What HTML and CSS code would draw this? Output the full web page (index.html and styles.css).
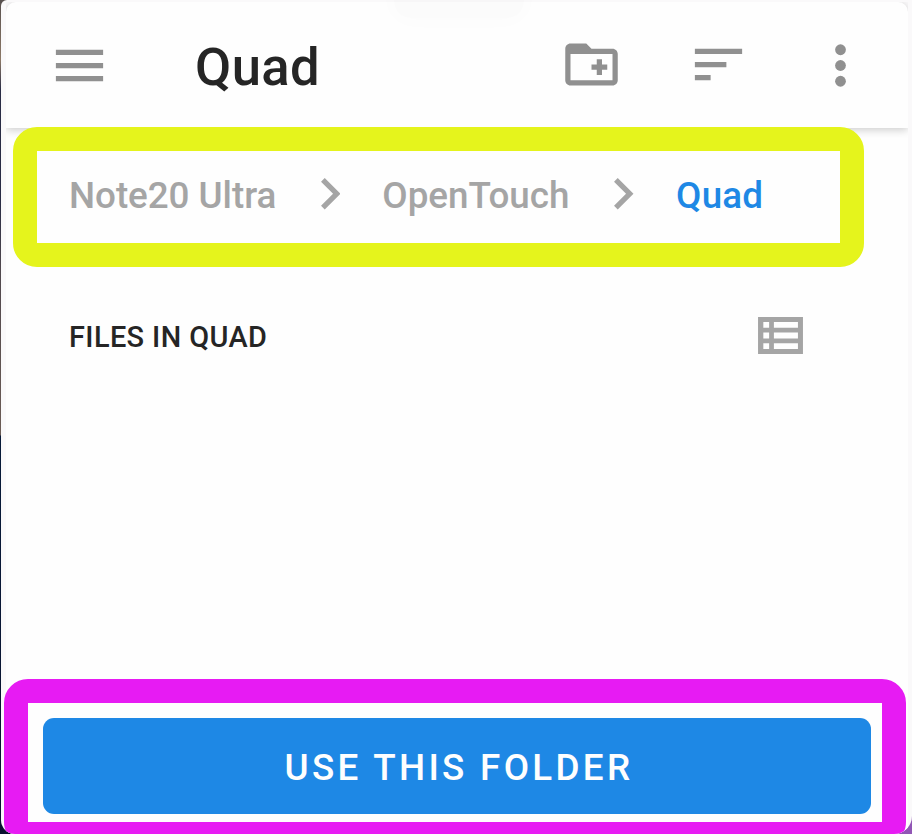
FILE: index.html
```html
<!DOCTYPE html>
<html lang="en">
<head>
<meta charset="utf-8">
<title>Quad</title>
<link rel="stylesheet" href="styles.css">
</head>
<body>
<div class="window">
  <main class="screen">
    <header class="app-bar">
      <svg class="icon menu" viewBox="0 0 24 24"><path d="M3 18h18v-2H3zM3 13h18v-2H3zM3 6v2h18V6z"/></svg>
      <h1 class="title">Quad</h1>
      <svg class="icon new-folder" viewBox="0 0 24 24"><path fill-rule="evenodd" d="M20 6h-8l-2-2H4c-1.11 0-1.99.89-1.99 2L2 18c0 1.11.89 2 2 2h16c1.11 0 2-.89 2-2V8c0-1.11-.89-2-2-2zm0 12H4V8h16z"/><path d="M12 14h2v2h2v-2h2v-2h-2v-2h-2v2h-2z"/></svg>
      <svg class="icon sort" viewBox="0 0 24 24"><path d="M3 18h6v-2H3zM3 6v2h18V6zM3 13h12v-2H3z"/></svg>
      <svg class="icon more" viewBox="0 0 24 24"><circle cx="12" cy="6" r="2.05"/><circle cx="12" cy="12" r="2.05"/><circle cx="12" cy="18" r="2.05"/></svg>
    </header>
    <nav class="breadcrumbs">
      <span class="crumb first">Note20 Ultra</span>
      <svg class="chevron" viewBox="8.59 6 7.41 12"><path d="M10 6 8.59 7.41 13.17 12l-4.58 4.59L10 18l6-6z"/></svg>
      <span class="crumb second">OpenTouch</span>
      <svg class="chevron" viewBox="8.59 6 7.41 12"><path d="M10 6 8.59 7.41 13.17 12l-4.58 4.59L10 18l6-6z"/></svg>
      <span class="crumb current">Quad</span>
    </nav>
    <section class="files">
      <h2 class="files-title">FILES IN QUAD</h2>
      <svg class="list-icon" viewBox="0 0 17 14"><path fill-rule="evenodd" d="M0 0h17v14H0zM2 1.9v2.2h2.2V1.9zm4 0v2.2h9.1V1.9zM2 5.9v2.2h2.2V5.9zm4 0v2.2h9.1V5.9zM2 9.9v2.2h2.2V9.9zm4 0v2.2h9.1V9.9z"/></svg>
    </section>
    <footer class="action">
      <button class="use-folder">USE THIS FOLDER</button>
    </footer>
  </main>
  <div class="camera-shade"></div>
</div>
</body>
</html>
```

FILE: styles.css
```css
* { box-sizing: border-box; }

body {
  margin: 0;
  height: 834px;
  overflow: hidden;
  padding-left: 1px;
  font-family: Roboto, "Liberation Sans", sans-serif;
  background: linear-gradient(90deg, transparent 50%, #9156b5 50%) 0 100% / 100% 20px no-repeat,
    linear-gradient(#57504e 0, #8c7967 60px, #292c45 90px, #292c45 200px, #50484d 270px, #6b5c55 435px, #071a38 436px, #0b1230 834px);
}

.window {
  position: relative;
  height: 834px;
  padding: 2px 4px 0 5px;
  border-radius: 6px 0 18px 14px;
  background: #faf9fa;
  overflow: hidden;
}

.screen {
  display: flex;
  flex-direction: column;
  height: 832px;
  border-radius: 10px 10px 0 0;
  background: #fefefe;
}

.app-bar {
  display: flex;
  align-items: center;
  flex: none;
  height: 126px;
  padding-left: 42px;
  border-radius: 10px 10px 0 0;
  background: #fefefe;
  box-shadow: 0 2px 9px rgba(0, 0, 0, 0.2);
  clip-path: inset(0 0 -16px 0);
}

.icon {
  flex: none;
  width: 63px;
  height: 63px;
  fill: #909090;
}

.title {
  width: 364px;
  margin: 3px 0 0 84px;
  font-size: 52.6px;
  font-weight: 500;
  line-height: 62px;
  letter-spacing: 0.4px;
  color: #252525;
}

.new-folder { margin: -2px 0 0 1px; }
.sort { margin: -1px 0 0 64px; }
.more { margin-left: 59px; }

.breadcrumbs {
  position: relative;
  display: flex;
  align-items: center;
  flex: none;
  width: 851px;
  height: 140px;
  margin: -1px 0 0 7px;
  padding: 0 0 6px 32px;
  border: 24px solid #e5f41c;
  border-radius: 24px;
  background: #fefefe;
}

.crumb {
  flex: none;
  padding-top: 4px;
  font-size: 36.8px;
  font-weight: 500;
  line-height: 44px;
  white-space: nowrap;
  color: #a5a5a5;
}

.first { width: 251.5px; letter-spacing: -0.05px; }
.second { width: 232px; }
.current { color: #1e88e5; letter-spacing: 0.2px; }

.chevron {
  flex: none;
  width: 19.5px;
  height: 31.5px;
  fill: #a5a5a5;
}

.chevron + .crumb { margin-left: 42.3px; }

.files {
  display: flex;
  align-items: center;
  justify-content: space-between;
  margin-top: 50px;
  padding: 0 105px 0 63px;
}

.files-title {
  margin: 3px 0 0;
  font-size: 28.9px;
  font-weight: 500;
  line-height: 34px;
  letter-spacing: 0.4px;
  color: #252525;
}

.list-icon {
  width: 45px;
  height: 37px;
  fill: #a5a5a5;
}

.action {
  flex: none;
  width: 902px;
  height: 167px;
  margin: auto 0 -12px -2px;
  padding: 15px 11px 8px 15px;
  border: 24px solid #e71bf3;
  border-radius: 24px;
  background: #fefefe;
}

.use-folder {
  display: block;
  width: 828px;
  height: 96px;
  padding: 3px 0 0 4px;
  border: 0;
  border-radius: 11px;
  background: #1e88e5;
  color: #fefefe;
  font: 500 36.8px/44px Roboto, "Liberation Sans", sans-serif;
  letter-spacing: 3.3px;
}

.camera-shade {
  position: absolute;
  top: -20px;
  left: 393px;
  width: 130px;
  height: 38px;
  border-radius: 16px;
  background: rgba(0, 0, 0, 0.012);
  box-shadow: 0 0 22px 2px rgba(0, 0, 0, 0.016);
}
```
